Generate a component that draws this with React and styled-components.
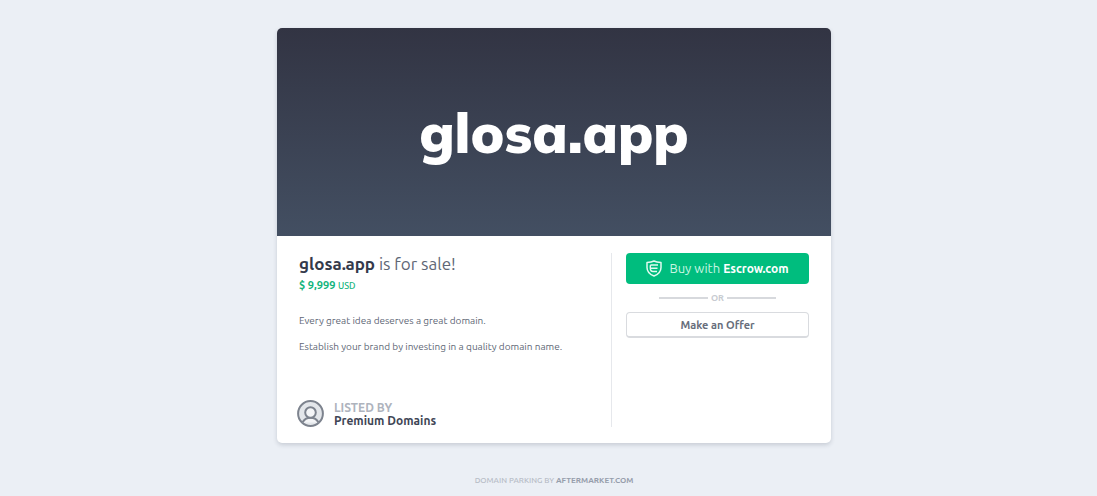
import styled, { createGlobalStyle } from 'styled-components'

const GlobalStyle = createGlobalStyle`
  * {
    box-sizing: border-box;
  }
  body {
    margin: 0;
    background-color: #ebeff5;
    font-family: Ubuntu, 'Noto Sans', 'Open Sans', sans-serif;
    color: #606776;
  }
  h1, h2, p {
    margin: 0;
  }
`
const Page = styled.div`
  min-height: 100vh;
  padding: 28px 16px 7px 27px;
  display: flex;
  flex-direction: column;
  align-items: center;
  justify-content: space-between;
`
const Card = styled.main`
  width: 100%;
  max-width: 554px;
  background-color: white;
  border-radius: 5px;
  overflow: hidden;
  box-shadow: 0 2px 4px rgba(60, 70, 90, 0.2);
`
const Hero = styled.header`
  height: 208px;
  padding-top: 2px;
  display: flex;
  align-items: center;
  justify-content: center;
  background: linear-gradient(#323443, #434f62);
`
const HeroName = styled.h1`
  color: white;
  font-family: Mulish, 'Open Sans', sans-serif;
  font-size: 55px;
  font-weight: 900;
  line-height: 72px;
`
const Body = styled.div`
  padding: 17px 22px 16px;
  display: flex;
`
const Info = styled.section`
  flex: 1;
  min-height: 174px;
  display: flex;
  flex-direction: column;
  border-right: 1px solid #e6e8ec;
`
const Title = styled.h2`
  color: #606776;
  font-size: 17px;
  font-weight: 400;
  line-height: 22px;

  strong {
    color: #343a4b;
    font-weight: 700;
  }
`
const Price = styled.p`
  color: #12b47c;
  font-size: 11px;
  font-weight: 700;
  line-height: 20px;

  small {
    font-size: 9px;
    font-weight: 500;
  }
`
const Description = styled.div`
  margin-top: 17px;
  display: flex;
  flex-direction: column;
  gap: 10px;
  font-size: 10px;
  line-height: 16px;
`
const Seller = styled.div`
  margin-top: auto;
  margin-left: -2px;
  display: flex;
  align-items: flex-end;
  gap: 10px;
`
const SellerText = styled.div`
  color: #3f4656;
  font-size: 12px;
  font-weight: 700;
  line-height: 13px;
`
const Label = styled.div`
  color: #aeb3bd;
`
const Actions = styled.section`
  width: 197px;
  padding-left: 14px;
`
const Button = styled.button`
  width: 100%;
  height: ${(props) => (props.$primary ? '31px' : '26px')};
  padding: 0;
  display: flex;
  align-items: center;
  justify-content: center;
  gap: 7px;
  border: ${(props) => (props.$primary ? 'none' : '1px solid #d9dbdf')};
  border-bottom-width: 2px;
  border-radius: 4px;
  background-color: ${(props) => (props.$primary ? '#00bd7e' : 'white')};
  color: ${(props) => (props.$primary ? '#c8f5e2' : '#686e7c')};
  font-family: inherit;
  font-size: ${(props) => (props.$primary ? '13px' : '11px')};
  font-weight: ${(props) => (props.$primary ? 400 : 700)};
  line-height: 16px;
  cursor: pointer;

  strong {
    color: white;
    font-size: 12px;
    font-weight: 700;
  }
`
const Or = styled.div`
  height: 28px;
  padding: 0 33px;
  display: flex;
  align-items: center;
  gap: 3px;
  color: #c8cbd1;
  font-size: 9px;
  font-weight: 700;

  &::before,
  &::after {
    content: '';
    flex: 1;
    height: 2px;
    background-color: #d7d9dd;
  }
`
const Footer = styled.footer`
  color: #b8bdc7;
  font-size: 8px;
  font-weight: 500;
  line-height: 16px;
`
const FooterLink = styled.a`
  color: #979eac;
  font-weight: 700;
  text-decoration: none;
`

const ShieldIcon = () => (
  <svg width='16' height='17' viewBox='0 0 16 17' fill='none' stroke='#e2faf0' aria-hidden='true'>
    <path d='M8 1C6 2 3.500 2.300 1 2.400V7.500C1 11.500 3.500 14.300 8 16C12.500 14.300 15 11.500 15 7.500V2.400C12.500 2.300 10 2 8 1Z' strokeWidth='1.500' strokeLinejoin='round' />
    <path d='M12 5H5.300C4.500 5 4.300 5.400 4.300 6.200V8C4.300 10.300 5.300 11.500 7 11.500H11M4.800 8.200H11.500' strokeWidth='1.400' />
  </svg>
)

const UserIcon = () => (
  <svg width='27' height='27' viewBox='0 0 27 27' fill='none' stroke='#7d838e' strokeWidth='2' aria-hidden='true'>
    <circle cx='13.500' cy='13.500' r='12.400' fill='#e3e6ea' />
    <path d='M5.500 22.500C7 19.500 9.800 17.700 13.500 17.700C17.200 17.700 20 19.500 21.500 22.500' fill='#f4f5f7' />
    <circle cx='13.500' cy='12.500' r='5.300' fill='#f4f5f7' />
  </svg>
)

const App = () => {
  return (
    <>
      <GlobalStyle />
      <Page>
        <Card>
          <Hero>
            <HeroName>glosa.app</HeroName>
          </Hero>
          <Body>
            <Info>
              <Title>
                <strong>glosa.app</strong> is for sale!
              </Title>
              <Price>
                $ 9,999 <small>USD</small>
              </Price>
              <Description>
                <p>Every great idea deserves a great domain.</p>
                <p>Establish your brand by investing in a quality domain name.</p>
              </Description>
              <Seller>
                <UserIcon />
                <SellerText>
                  <Label>LISTED BY</Label>
                  Premium Domains
                </SellerText>
              </Seller>
            </Info>
            <Actions>
              <Button type='button' $primary>
                <ShieldIcon />
                <span>
                  Buy with <strong>Escrow.com</strong>
                </span>
              </Button>
              <Or>OR</Or>
              <Button type='button'>Make an Offer</Button>
            </Actions>
          </Body>
        </Card>
        <Footer>
          DOMAIN PARKING BY <FooterLink href='#'>AFTERMARKET.COM</FooterLink>
        </Footer>
      </Page>
    </>
  )
}

export default App
